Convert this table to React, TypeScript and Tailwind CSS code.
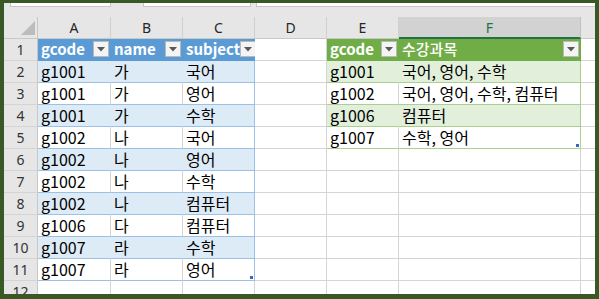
import React from "react";

const blueRows: [string, string, string][] = [
  ["g1001", "가", "국어"],
  ["g1001", "가", "영어"],
  ["g1001", "가", "수학"],
  ["g1002", "나", "국어"],
  ["g1002", "나", "영어"],
  ["g1002", "나", "수학"],
  ["g1002", "나", "컴퓨터"],
  ["g1006", "다", "컴퓨터"],
  ["g1007", "라", "수학"],
  ["g1007", "라", "영어"],
];

const greenRows: [string, string][] = [
  ["g1001", "국어, 영어, 수학"],
  ["g1002", "국어, 영어, 수학, 컴퓨터"],
  ["g1006", "컴퓨터"],
  ["g1007", "수학, 영어"],
];

function FilterBtn() {
  return (
    <div className="ml-auto mr-[1px] mt-[2px] w-[16px] h-[16px] shrink-0 bg-[#f4f4f4] border border-[#b9b9b9] flex items-center justify-center">
      <svg width="8" height="5" viewBox="0 0 8 5">
        <path d="M0 0H8L4 4.5Z" fill="#595959" />
      </svg>
    </div>
  );
}

function Handle() {
  return <div className="absolute right-[1px] bottom-[1px] w-[3px] h-[3px] bg-[#3f64b8]" />;
}

const cellText = "font-['Noto_Sans_CJK_KR',sans-serif] text-[16px] leading-[21px] text-black whitespace-nowrap";

export default function App() {
  const rows: React.ReactNode[] = [];

  rows.push(
    <div key="corner" className="relative bg-[#e6e6e6] border-r border-b border-[#c8c8c8]">
      <svg className="absolute left-[17px] top-[4px]" width="14" height="14" viewBox="0 0 14 14">
        <path d="M14 0V14H0Z" fill="#bcbcbc" />
      </svg>
    </div>
  );
  ["A", "B", "C", "D", "E"].forEach((c) =>
    rows.push(
      <div
        key={"h" + c}
        className="bg-[#e6e6e6] border-r border-r-[#d0d0d0] border-b border-b-[#c8c8c8] flex items-center justify-center font-['Noto_Sans',sans-serif] text-[14px] text-[#262626]"
      >
        {c}
      </div>
    )
  );
  rows.push(
    <div
      key="hF"
      className="bg-[#d2d2d2] border-r border-r-[#c0c0c0] border-b-2 border-b-[#217346] flex items-center justify-center font-['Noto_Sans',sans-serif] text-[14px] text-[#217346]"
    >
      F
    </div>
  );
  rows.push(<div key="hG" className="bg-[#e6e6e6] border-b border-b-[#c8c8c8]" />);

  for (let r = 1; r <= 12; r++) {
    const rh =
      "bg-[#e6e6e6] border-r border-r-[#c8c8c8] border-b border-b-[#d4d4d4] flex items-center justify-center font-['Noto_Sans',sans-serif] text-[14px] text-[#333333]";
    rows.push(
      <div key={"r" + r} className={rh}>
        {r}
      </div>
    );

    if (r === 1) {
      const heads = ["gcode", "name", "subject"];
      heads.forEach((h, i) =>
        rows.push(
          <div
            key={"b" + r + i}
            className="bg-[#5b9bd5] border-r border-b border-[#5b9bd5] flex items-start pl-[3px]"
          >
            <span className="font-['Noto_Sans_CJK_KR',sans-serif] text-[15px] leading-[20px] font-bold text-white whitespace-nowrap">
              {h}
            </span>
            <FilterBtn />
          </div>
        )
      );
    } else if (r <= 11) {
      const d = blueRows[r - 2];
      const band = r % 2 === 0;
      d.forEach((v, i) => {
        let cls: string;
        if (band) {
          cls =
            i === 2
              ? "relative bg-[#ddebf7] border-r border-r-[#9bc2e6] border-b border-b-[#9bc2e6] flex items-end pl-[3px]"
              : "relative bg-[#ddebf7] border-r border-r-[#ddebf7] border-b border-b-[#9bc2e6] flex items-end pl-[3px]";
        } else {
          cls =
            i === 2
              ? "relative bg-white border-r border-r-[#9bc2e6] border-b border-b-[#9bc2e6] flex items-end pl-[3px]"
              : "relative bg-white border-r border-r-[#d4d4d4] border-b border-b-[#9bc2e6] flex items-end pl-[3px]";
        }
        rows.push(
          <div key={"b" + r + i} className={cls}>
            <span className={cellText}>{v}</span>
            {r === 11 && i === 2 ? <Handle /> : null}
          </div>
        );
      });
    } else {
      for (let i = 0; i < 3; i++)
        rows.push(<div key={"b" + r + i} className="bg-white border-r border-b border-[#d4d4d4]" />);
    }

    rows.push(<div key={"d" + r} className="bg-white border-r border-b border-[#d4d4d4]" />);

    if (r === 1) {
      rows.push(
        <div key={"g" + r + 0} className="bg-[#70ad47] border-r border-b border-[#70ad47] flex items-start pl-[3px]">
          <span className="font-['Noto_Sans_CJK_KR',sans-serif] text-[15px] leading-[20px] font-bold text-white whitespace-nowrap">
            gcode
          </span>
          <FilterBtn />
        </div>
      );
      rows.push(
        <div key={"g" + r + 1} className="bg-[#70ad47] border-r border-b border-[#70ad47] flex items-start pl-[3px]">
          <span className="font-['Noto_Sans_CJK_KR',sans-serif] text-[15px] leading-[20px] font-medium text-white whitespace-nowrap">
            수강과목
          </span>
          <FilterBtn />
        </div>
      );
    } else if (r <= 5) {
      const d = greenRows[r - 2];
      const band = r % 2 === 0;
      rows.push(
        <div
          key={"g" + r + 0}
          className={
            band
              ? "bg-[#e2efda] border-r border-r-[#e2efda] border-b border-b-[#a9d08e] flex items-end pl-[3px]"
              : "bg-white border-r border-r-[#d4d4d4] border-b border-b-[#a9d08e] flex items-end pl-[3px]"
          }
        >
          <span className={cellText}>{d[0]}</span>
        </div>
      );
      rows.push(
        <div
          key={"g" + r + 1}
          className={
            band
              ? "relative bg-[#e2efda] border-r border-r-[#a9d08e] border-b border-b-[#a9d08e] flex items-end pl-[3px]"
              : "relative bg-white border-r border-r-[#a9d08e] border-b border-b-[#a9d08e] flex items-end pl-[3px]"
          }
        >
          <span className={cellText}>{d[1]}</span>
          {r === 5 ? <Handle /> : null}
        </div>
      );
    } else {
      rows.push(<div key={"g" + r + 0} className="bg-white border-r border-b border-[#d4d4d4]" />);
      rows.push(<div key={"g" + r + 1} className="bg-white border-r border-b border-[#d4d4d4]" />);
    }
    rows.push(<div key={"x" + r} className="bg-white border-b border-[#d4d4d4]" />);
  }

  return (
    <div className="w-[599px] h-[299px] bg-[#3a5726] pt-[3px] pl-[4px] pr-[4px] pb-[5px]">
      <div className="w-full h-full bg-white flex flex-col overflow-hidden">
        <div className="h-[14px] shrink-0 bg-[#e6e6e6] flex items-start">
          <div className="ml-[6px] w-[101px] h-[4px] bg-white border-x border-b border-[#c6c6c6]" />
          <div className="ml-[32px] w-[108px] h-[4px] bg-white border-x border-b border-[#c6c6c6]" />
          <div className="ml-[5px] flex-1 h-[4px] bg-white border-l border-b border-[#c6c6c6]" />
        </div>
        <div className="grid grid-cols-[34px_73px_72px_72px_72px_72px_182px_14px] auto-rows-[22px] overflow-hidden">
          {rows}
        </div>
      </div>
    </div>
  );
}
